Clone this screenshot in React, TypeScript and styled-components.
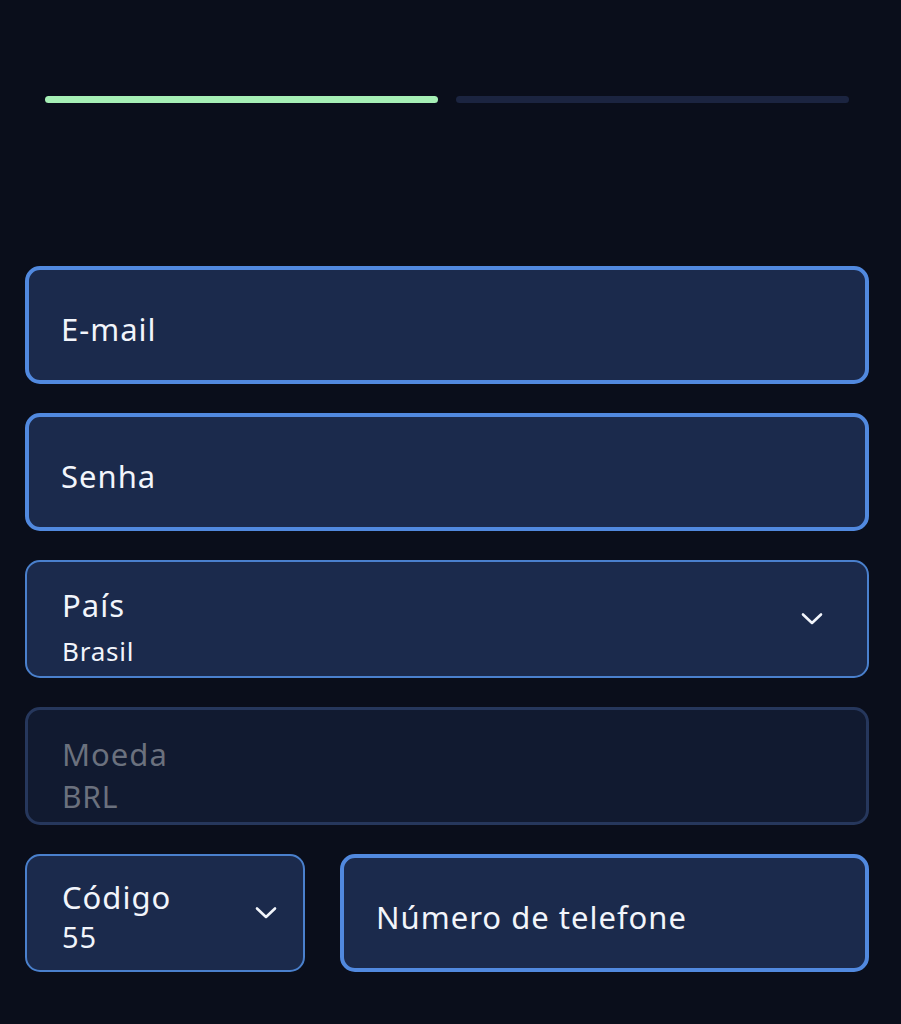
import React from 'react';
import styled, { createGlobalStyle, css } from 'styled-components';

const GlobalStyle = createGlobalStyle`
  html, body {
    margin: 0;
    padding: 0;
    background: #0a0e1b;
  }
  body {
    font-family: 'Noto Sans', 'Open Sans', sans-serif;
    color: #f2f5fb;
  }
`;

const Page = styled.div`
  min-height: 1024px;
  box-sizing: border-box;
  padding: 96px 32px 0 25px;
  background: #0a0e1b;
`;

const Progress = styled.div`
  display: flex;
  gap: 18px;
  padding: 0 20px;
  margin-bottom: 163px;
`;

const Step = styled.div<{ $done?: boolean }>`
  flex: 1;
  height: 7px;
  border-radius: 4px;
  background: ${(p) => (p.$done ? '#a6efb6' : '#1b2440')};
`;

const Form = styled.div`
  display: flex;
  flex-direction: column;
  gap: 29px;
`;

type Variant = 'focus' | 'normal' | 'disabled';

const Field = styled.div<{ $variant: Variant; $pad?: number }>`
  box-sizing: border-box;
  height: 118px;
  border-radius: 15px;
  display: flex;
  align-items: center;
  justify-content: space-between;
  padding: 0 44px 0 ${(p) => p.$pad ?? 33}px;
  ${(p) =>
    p.$variant === 'focus' &&
    css`
      border: 4px solid #5189df;
      background: #1b2a4c;
    `}
  ${(p) =>
    p.$variant === 'normal' &&
    css`
      border: 2px solid #4a80cd;
      background: #1b2a4c;
    `}
  ${(p) =>
    p.$variant === 'disabled' &&
    css`
      border: 3px solid #26375c;
      background: #111a30;
    `}
`;

const Texts = styled.div<{ $shift?: number }>`
  display: flex;
  flex-direction: column;
  padding-top: ${(p) => p.$shift ?? 7}px;
`;

const Label = styled.span<{ $muted?: boolean }>`
  font-size: 31px;
  line-height: 38px;
  letter-spacing: 1px;
  color: ${(p) => (p.$muted ? '#6b717e' : '#f2f5fb')};
`;

const Value = styled.span<{ $muted?: boolean; $size?: number; $gap?: number }>`
  font-size: ${(p) => p.$size ?? 26}px;
  line-height: 34px;
  letter-spacing: 0.8px;
  margin-top: ${(p) => p.$gap ?? 10}px;
  color: ${(p) => (p.$muted ? '#6b717e' : '#f2f5fb')};
`;

const Row = styled.div`
  display: flex;
  gap: 35px;
`;

const CodeField = styled(Field)`
  width: 280px;
  flex: none;
  padding-right: 26px;
`;

const PhoneField = styled(Field)`
  flex: 1;
`;

const Chevron = () => (
  <svg width="22" height="14" viewBox="0 0 22 14" fill="none">
    <path d="M2 2.5 L11 11 L20 2.5" stroke="#f2f5fb" strokeWidth="2.6" strokeLinecap="round" strokeLinejoin="round" />
  </svg>
);

const App: React.FC = () => (
  <>
    <GlobalStyle />
    <Page>
      <Progress>
        <Step $done />
        <Step />
      </Progress>
      <Form>
        <Field $variant="focus" $pad={32}>
          <Texts>
            <Label>E-mail</Label>
          </Texts>
        </Field>
        <Field $variant="focus" $pad={32}>
          <Texts>
            <Label>Senha</Label>
          </Texts>
        </Field>
        <Field $variant="normal" $pad={35}>
          <Texts $shift={16}>
            <Label>País</Label>
            <Value>Brasil</Value>
          </Texts>
          <Chevron />
        </Field>
        <Field $variant="disabled" $pad={34}>
          <Texts $shift={17}>
            <Label $muted>Moeda</Label>
            <Value $muted $size={30} $gap={7}>
              BRL
            </Value>
          </Texts>
        </Field>
        <Row>
          <CodeField $variant="normal" $pad={35}>
            <Texts $shift={6}>
              <Label>Código</Label>
              <Value $size={29} $gap={4}>
                55
              </Value>
            </Texts>
            <Chevron />
          </CodeField>
          <PhoneField $variant="focus" $pad={32}>
            <Texts>
              <Label>Número de telefone</Label>
            </Texts>
          </PhoneField>
        </Row>
      </Form>
    </Page>
  </>
);

export default App;
